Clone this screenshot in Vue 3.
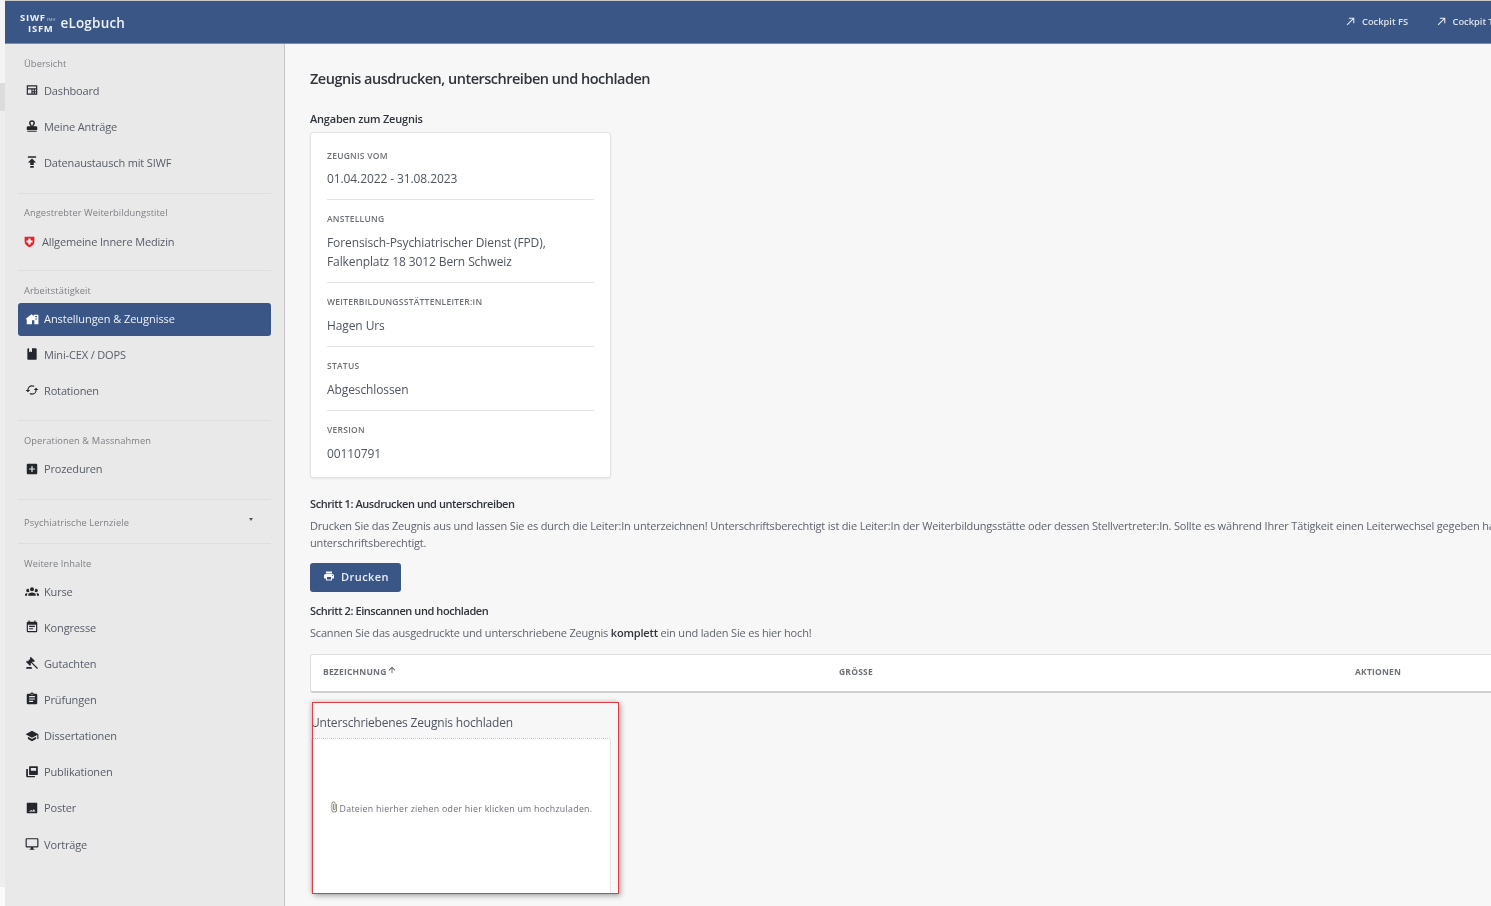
<script setup>
const P = {
  dash: 'M3 4h18v16H3zM5 6v3h14V6zM5 11v7h6v-7zM13 11v3h2v-3zM17 11v3h2v-3zM13 16v2h2v-2zM17 16v2h2v-2z',
  stamp: 'M12 2a5 5 0 0 1 5 5c0 2-1 3-2 4l-.6 1.5H19a2 2 0 0 1 2 2V19H3v-4.500a2 2 0 0 1 2-2h4.600L9 11C8 10 7 9 7 7a5 5 0 0 1 5-5zM12 4.500A2.500 2.500 0 0 0 9.500 7c0 1 .5 2 1.500 2.800V11h2V9.800c1-.8 1.500-1.800 1.500-2.800A2.500 2.500 0 0 0 12 4.500zM4 20h16v2H4z',
  upload: 'M5 2h14v2.500H5zM12 6l7 7h-4v4H9v-4H5zM9 19h6v3H9z',
  home: 'M1 12 11 4l4 3V4.500h8V21h-7v-7h-4v7H3v-8zM17.500 7v2h3V7zM17.500 11v2h3v-2z',
  book: 'M18,22A2,2 0 0,0 20,20V4C20,2.890 19.100,2 18,2H12V9L9.500,7.500L7,9V2H6A2,2 0 0,0 4,4V20A2,2 0 0,0 6,22H18Z',
  sync: 'M12,18A6,6 0 0,1 6,12C6,11 6.250,10.030 6.700,9.200L5.240,7.740C4.460,8.970 4,10.430 4,12A8,8 0 0,0 12,20V23L16,19L12,15M12,4V1L8,5L12,9V6A6,6 0 0,1 18,12C18,13 17.750,13.970 17.300,14.800L18.760,16.260C19.540,15.030 20,13.570 20,12A8,8 0 0,0 12,4Z',
  plus: 'M17,13H13V17H11V13H7V11H11V7H13V11H17M19,3H5C3.890,3 3,3.890 3,5V19A2,2 0 0,0 5,21H19A2,2 0 0,0 21,19V5C21,3.890 20.100,3 19,3Z',
  group: 'M12,5.500A3.500,3.500 0 0,1 15.500,9A3.500,3.500 0 0,1 12,12.500A3.500,3.500 0 0,1 8.500,9A3.500,3.500 0 0,1 12,5.500M5,8C5.560,8 6.080,8.150 6.530,8.420C6.380,9.850 6.800,11.270 7.660,12.380C7.160,13.340 6.160,14 5,14A3,3 0 0,1 2,11A3,3 0 0,1 5,8M19,8A3,3 0 0,1 22,11A3,3 0 0,1 19,14C17.840,14 16.840,13.340 16.340,12.380C17.200,11.270 17.620,9.850 17.470,8.420C17.920,8.150 18.440,8 19,8M5.500,18.250C5.500,16.180 8.410,14.500 12,14.500C15.590,14.500 18.500,16.180 18.500,18.250V20H5.500V18.250M0,20V18.500C0,17.110 1.890,15.940 4.450,15.600C3.860,16.280 3.500,17.220 3.500,18.250V20H0M24,20H20.500V18.250C20.500,17.220 20.140,16.280 19.550,15.600C22.110,15.940 24,17.110 24,18.500V20Z',
  cal: 'M14,14H7V16H14M19,19H5V8H19M19,3H18V1H16V3H8V1H6V3H5C3.890,3 3,3.900 3,5V19A2,2 0 0,0 5,21H19A2,2 0 0,0 21,19V5A2,2 0 0,0 19,3M17,10H7V12H17V10Z',
  gavel: 'M2.300,20.280L11.900,10.680L10.500,9.260L9.780,9.970C9.390,10.360 8.760,10.360 8.370,9.970L7.660,9.260C7.270,8.870 7.270,8.240 7.660,7.850L13.320,2.190C13.710,1.800 14.340,1.800 14.730,2.190L15.440,2.900C15.830,3.290 15.830,3.920 15.440,4.310L14.730,5L16.150,6.430C16.540,6.040 17.170,6.040 17.560,6.430C17.950,6.820 17.950,7.460 17.560,7.850L18.970,9.260L19.680,8.550C20.070,8.160 20.710,8.160 21.100,8.550L21.800,9.260C22.190,9.650 22.190,10.290 21.800,10.680L16.150,16.330C15.760,16.720 15.120,16.720 14.730,16.330L14.030,15.630C13.630,15.240 13.630,14.600 14.030,14.210L14.730,13.500L13.320,12.090L3.710,21.700C3.320,22.090 2.690,22.090 2.300,21.700C1.910,21.310 1.910,20.670 2.300,20.280M20,19A2,2 0 0,1 22,21V22H12V21A2,2 0 0,1 14,19H20Z',
  clip: 'M17,9H7V7H17M17,13H7V11H17M14,17H7V15H14M12,3A1,1 0 0,1 13,4A1,1 0 0,1 12,5A1,1 0 0,1 11,4A1,1 0 0,1 12,3M19,3H14.820C14.400,1.840 13.300,1 12,1C10.700,1 9.600,1.840 9.180,3H5A2,2 0 0,0 3,5V19A2,2 0 0,0 5,21H19A2,2 0 0,0 21,19V5A2,2 0 0,0 19,3Z',
  school: 'M12,3L1,9L12,15L21,10.090V17H23V9M5,13.180V17.180L12,21L19,17.180V13.180L12,17L5,13.180Z',
  pub: 'M8 2h13a1 1 0 0 1 1 1v13a1 1 0 0 1-1 1H8a1 1 0 0 1-1-1V3a1 1 0 0 1 1-1zM10 5v5h9V5zM3 7h2v12h12v2H4a2 2 0 0 1-2-2V8a1 1 0 0 1 1-1z',
  poster: 'M4 3h16a1 1 0 0 1 1 1v16a1 1 0 0 1-1 1H4a1 1 0 0 1-1-1V4a1 1 0 0 1 1-1zM6 18h12l-3-4-2.500 3-1.500-1.500z',
  monitor: 'M21,16H3V4H21M21,2H3C1.890,2 1,2.890 1,4V16A2,2 0 0,0 3,18H10V20H8V22H16V20H14V18H21A2,2 0 0,0 23,16V4C23,2.890 22.100,2 21,2Z',
  printer: 'M18,3H6V7H18M19,12A1,1 0 0,1 18,11A1,1 0 0,1 19,10A1,1 0 0,1 20,11A1,1 0 0,1 19,12M16,19H8V14H16M19,8H5A3,3 0 0,0 2,11V17H6V21H18V17H22V11A3,3 0 0,0 19,8Z',
  arrowUp: 'M13,20H11V8L5.500,13.500L4.080,12.080L12,4.160L19.920,12.080L18.500,13.500L13,8V20Z',
  arrowTR: 'M5,17.590L15.590,7H9V5H19V15H17V8.410L6.410,19L5,17.590Z',
  paperclip: 'M16.500,6V17.500A4,4 0 0,1 12.500,21.500A4,4 0 0,1 8.500,17.500V5A2.500,2.500 0 0,1 11,2.500A2.500,2.500 0 0,1 13.500,5V15.500A1,1 0 0,1 12.500,16.500A1,1 0 0,1 11.500,15.500V6H10V15.500A2.500,2.500 0 0,0 12.500,18A2.500,2.500 0 0,0 15,15.500V5A4,4 0 0,0 11,1A4,4 0 0,0 7,5V17.500A5.500,5.500 0 0,0 12.500,23A5.500,5.500 0 0,0 18,17.500V6H16.500Z'
}

const sections = [
  { key: 'a', label: 'Übersicht', cls: 's-first', items: [
    { t: 'Dashboard', i: 'dash' }, { t: 'Meine Anträge', i: 'stamp' }, { t: 'Datenaustausch mit SIWF', i: 'upload' } ] },
  { key: 'b', label: 'Angestrebter Weiterbildungstitel', cls: 's-title', items: [
    { t: 'Allgemeine Innere Medizin', i: 'swiss' } ] },
  { key: 'c', label: 'Arbeitstätigkeit', cls: 's-work', items: [
    { t: 'Anstellungen & Zeugnisse', i: 'home', active: true }, { t: 'Mini-CEX / DOPS', i: 'book' }, { t: 'Rotationen', i: 'sync', rot: true } ] },
  { key: 'd', label: 'Operationen & Massnahmen', cls: 's-ops', items: [
    { t: 'Prozeduren', i: 'plus' } ] }
]
const more = [
  { t: 'Kurse', i: 'group' }, { t: 'Kongresse', i: 'cal' }, { t: 'Gutachten', i: 'gavel', flip: true },
  { t: 'Prüfungen', i: 'clip' }, { t: 'Dissertationen', i: 'school' }, { t: 'Publikationen', i: 'pub' },
  { t: 'Poster', i: 'poster' }, { t: 'Vorträge', i: 'monitor' }
]
const facts = [
  { k: 'Zeugnis vom', v: ['01.04.2022 - 31.08.2023'] },
  { k: 'Anstellung', v: ['Forensisch-Psychiatrischer Dienst (FPD),', 'Falkenplatz 18 3012 Bern Schweiz'] },
  { k: 'Weiterbildungsstättenleiter:in', v: ['Hagen Urs'] },
  { k: 'Status', v: ['Abgeschlossen'] },
  { k: 'Version', v: ['00110791'] }
]
</script>

<template>
  <div class="page">
    <div class="edge"></div>
    <div class="shell">
      <header class="topbar">
        <div class="brand">
          <div class="logo">
            <span class="logo-a">SIWF<small>FMH</small></span>
            <span class="logo-b">ISFM</span>
          </div>
          <span class="brand-name">eLogbuch</span>
        </div>
        <nav class="top-links">
          <a class="top-link"><svg viewBox="0 0 24 24"><path :d="P.arrowTR" /></svg>Cockpit FS</a>
          <a class="top-link"><svg viewBox="0 0 24 24"><path :d="P.arrowTR" /></svg>Cockpit TP</a>
        </nav>
      </header>
      <div class="body">
        <aside class="sidebar">
          <section v-for="s in sections" :key="s.key" class="side-section" :class="s.cls">
            <div class="side-label">{{ s.label }}</div>
            <a v-for="it in s.items" :key="it.t" class="side-item" :class="{ active: it.active, swissitem: it.i === 'swiss' }">
              <svg v-if="it.i === 'swiss'" class="swiss" viewBox="0 0 24 24">
                <path d="M3 3h18v9c0 5-4 8.500-9 10.500C7 20.500 3 17 3 12z" fill="#e8202a" />
                <path d="M10 6.500h4v3.500h3.500v4H14v3.500h-4V14H6.500v-4H10z" fill="#fff" />
              </svg>
              <svg v-else class="ico" :class="{ rot: it.rot }" viewBox="0 0 24 24"><path fill-rule="evenodd" :d="P[it.i]" /></svg>
              <span>{{ it.t }}</span>
            </a>
          </section>
          <section class="side-section s-collapse">
            <div class="side-label">Psychiatrische Lernziele</div>
            <span class="caret"></span>
          </section>
          <section class="side-section s-more">
            <div class="side-label">Weitere Inhalte</div>
            <a v-for="it in more" :key="it.t" class="side-item">
              <svg class="ico" :class="{ flip: it.flip }" viewBox="0 0 24 24"><path fill-rule="evenodd" :d="P[it.i]" /></svg>
              <span>{{ it.t }}</span>
            </a>
          </section>
        </aside>
        <main class="main">
          <div class="content">
            <h1>Zeugnis ausdrucken, unterschreiben und hochladen</h1>
            <h2 class="h-facts">Angaben zum Zeugnis</h2>
            <div class="facts">
              <div v-for="f in facts" :key="f.k" class="fact">
                <div class="fact-k">{{ f.k }}</div>
                <div class="fact-v" v-for="line in f.v" :key="line">{{ line }}</div>
              </div>
            </div>
            <h2 class="h-step1">Schritt 1: Ausdrucken und unterschreiben</h2>
            <p class="para">Drucken Sie das Zeugnis aus und lassen Sie es durch die Leiter:In unterzeichnen! Unterschriftsberechtigt ist die Leiter:In der Weiterbildungsstätte oder dessen Stellvertreter:In. Sollte es während Ihrer Tätigkeit einen Leiterwechsel gegeben haben<br />unterschriftsberechtigt.</p>
            <button class="print"><svg viewBox="0 0 24 24"><path :d="P.printer" /></svg>Drucken</button>
            <h2 class="h-step2">Schritt 2: Einscannen und hochladen</h2>
            <p class="para para2">Scannen Sie das ausgedruckte und unterschriebene Zeugnis <b>komplett</b> ein und laden Sie es hier hoch!</p>
            <div class="table">
              <div class="th"><span>Bezeichnung</span><svg viewBox="0 0 24 24"><path :d="P.arrowUp" /></svg></div>
              <div class="th">Grösse</div>
              <div class="th">Aktionen</div>
            </div>
            <div class="upload">
              <div class="upload-title">Unterschriebenes Zeugnis hochladen</div>
              <div class="drop">
                <svg class="clipicon" viewBox="0 0 24 24"><path :d="P.paperclip" /></svg>
                <span>Dateien hierher ziehen oder hier klicken um hochzuladen.</span>
              </div>
              <div class="redbox"></div>
            </div>
          </div>
        </main>
      </div>
    </div>
  </div>
</template>

<style>
html, body { margin: 0; padding: 0; overflow: hidden; }
</style>

<style scoped>
.page { display: flex; width: 1491px; height: 906px; overflow: hidden; background: #f4f4f4; font-family: "Open Sans", "Liberation Sans", sans-serif; color: #555b66; filter: blur(.3px); }
.edge { width: 5px; flex: none; background: linear-gradient(#f4f4f4 0 83px, #dcdcdc 83px 111px, #eeeeee 111px 887px, #fafafa 887px); }
.shell { flex: 1; display: flex; flex-direction: column; min-width: 0; padding-top: 1px; background: #c9c9c9; }
.topbar { height: 43px; flex: none; background: #3a5686; color: #e7ecf4; display: flex; align-items: center; justify-content: space-between; padding: 0 0 2px 15px; border-bottom: 1px solid #7f8ea6; box-sizing: border-box; }
.brand { display: flex; align-items: center; gap: 5px; margin-top: 3px; }
.logo { display: flex; flex-direction: column; font-size: 9.500px; font-weight: 700; line-height: 9px; letter-spacing: .75px; color: #eef1f6; }
.logo small { font-size: 4px; font-weight: 400; margin-left: 1px; letter-spacing: 0; opacity: .7; }
.logo-b { padding-left: 8px; }
.brand-name { font-size: 13.500px; font-weight: 600; letter-spacing: .2px; color: #eef1f6; }
.top-links { display: flex; gap: 26.500px; margin-right: -8.500px; white-space: nowrap; }
.top-link { display: flex; align-items: center; font-size: 9.300px; font-weight: 600; gap: 5px; color: #dde3ed; }
.top-link svg { width: 13px; height: 13px; fill: #e7ecf4; }
.body { flex: 1; display: flex; min-height: 0; }
.sidebar { width: 280px; flex: none; box-sizing: border-box; background: #e9e9e9; border-right: 1px solid #c4c4c4; padding: 0 13px; }
.side-section { border-bottom: 1px solid #dedede; position: relative; }
.side-label { font-size: 9.300px; line-height: 14px; color: #7d7f84; padding-left: 6px; letter-spacing: .08px; }
.side-item { display: flex; align-items: center; height: 36.150px; padding-left: 7px; box-sizing: border-box; font-size: 11px; color: #565c68; letter-spacing: -.15px; }
.ico { width: 14px; height: 14px; margin-right: 5px; fill: #23262c; flex: none; }
.ico.rot { transform: rotate(90deg); }
.ico.flip { transform: scaleX(-1); }
.swiss { width: 13px; height: 13px; margin-left: -2px; margin-right: 6px; flex: none; }
.s-first { padding-top: 13px; padding-bottom: 13px; }
.s-first .side-label { margin-bottom: 1px; }
.s-title { padding-top: 12px; padding-bottom: 10px; }
.s-title .side-label { margin-bottom: 3px; }
.s-work { padding-top: 13px; padding-bottom: 11.500px; }
.s-work .side-label { margin-bottom: 5px; }
.s-ops { padding-top: 13px; padding-bottom: 12px; }
.s-ops .side-label { margin-bottom: 3px; }
.s-collapse { padding: 16px 0 13px; }
.caret { position: absolute; right: 18px; top: 18px; width: 0; height: 0; border: 2.500px solid transparent; border-top: 3px solid #555; border-bottom: 0; }
.s-more { padding-top: 13px; border-bottom: 0; }
.s-more .side-label { margin-bottom: 2px; }
.side-item.active { height: 33px; padding-bottom: 1px; background: #3a5686; color: #f0f3f8; border-radius: 3px; margin-bottom: .500px; letter-spacing: -.05px; }
.side-item.active .ico { fill: #fff; }
.main { flex: 1; min-width: 0; overflow: hidden; background: #f7f7f7; }
.content { width: 1550px; padding: 0 0 0 25px; }
h1 { margin: 25px 0 0; font-size: 14.500px; line-height: 20px; font-weight: 600; color: #30343b; letter-spacing: -.5px; }
h2 { margin: 0; font-size: 11px; line-height: 16px; font-weight: 600; color: #30343b; letter-spacing: -.42px; }
.h-facts { margin-top: 22px; letter-spacing: -.2px; }
.facts { width: 301px; box-sizing: border-box; background: #fff; margin-top: 5px; padding: 0 16px; border-radius: 3px; border: 1px solid #e3e3e3; box-shadow: 0 1px 2px rgba(0,0,0,.08); }
.fact { padding: 13.500px 0 11px; border-bottom: 1px solid #e2e2e2; }
.fact:first-child { padding: 17px 0 10.500px; }
.fact:last-child { border-bottom: 0; padding-bottom: 14px; }
.fact-k { font-size: 8.500px; line-height: 12px; font-weight: 600; text-transform: uppercase; color: #6e7078; letter-spacing: .25px; margin-bottom: 7.500px; }
.fact:first-child .fact-k { margin-bottom: 7px; }
.fact-v { font-size: 12px; line-height: 19px; color: #4f5560; letter-spacing: -.1px; }
.h-step1 { margin-top: 18px; }
.para { margin: 5px 0 0; font-size: 11px; line-height: 17px; color: #5e636d; letter-spacing: -.18px; white-space: nowrap; }
.print { display: flex; align-items: center; gap: 6px; margin-top: 12px; height: 29px; width: 91px; padding: 0 0 2px 13px; box-sizing: border-box; border: 0; border-radius: 3px; background: #3a5686; color: #e9edf4; font-family: inherit; font-size: 11px; font-weight: 600; letter-spacing: .45px; }
.print svg { width: 12px; height: 12px; fill: #f4f6fa; }
.h-step2 { margin-top: 11px; }
.para2 { margin-top: 5px; }
.para2 b { color: #30343b; font-weight: 600; }
.table { display: grid; grid-template-columns: repeat(3, 516px); margin-top: 13px; height: 39px; box-sizing: border-box; align-items: center; background: #fff; border: 1px solid #dedede; border-bottom: 2px solid #cfcfcf; border-radius: 3px; padding: 0 0 3px 12px; }
.th { display: flex; align-items: center; font-size: 8.500px; font-weight: 700; text-transform: uppercase; color: #6e7078; letter-spacing: .2px; }
.th svg { width: 10px; height: 10px; fill: #555; margin-left: 0; margin-top: -2px; }
.upload { position: relative; margin-top: 20px; }
.upload-title { font-size: 12px; line-height: 20px; color: #4f5560; letter-spacing: -.18px; padding-left: 1px; }
.drop { width: 300px; height: 156px; box-sizing: border-box; margin: 5px 0 0 1px; padding-bottom: 14px; background: #fff; border: 1px dotted #c9c9d2; border-radius: 2px; display: flex; align-items: center; justify-content: center; gap: 1px; font-size: 8.800px; color: #6b6f78; letter-spacing: .28px; }
.clipicon { width: 12px; height: 14px; fill: #77705e; margin: -3px -1px 0 -2px; }
.redbox { position: absolute; left: 2px; top: -11px; width: 307px; height: 192px; box-sizing: border-box; border: 1.500px solid #e23d45; box-shadow: 2px 2px 5px rgba(0,0,0,.3), -2px -1px 4px rgba(0,0,0,.12); }
</style>
